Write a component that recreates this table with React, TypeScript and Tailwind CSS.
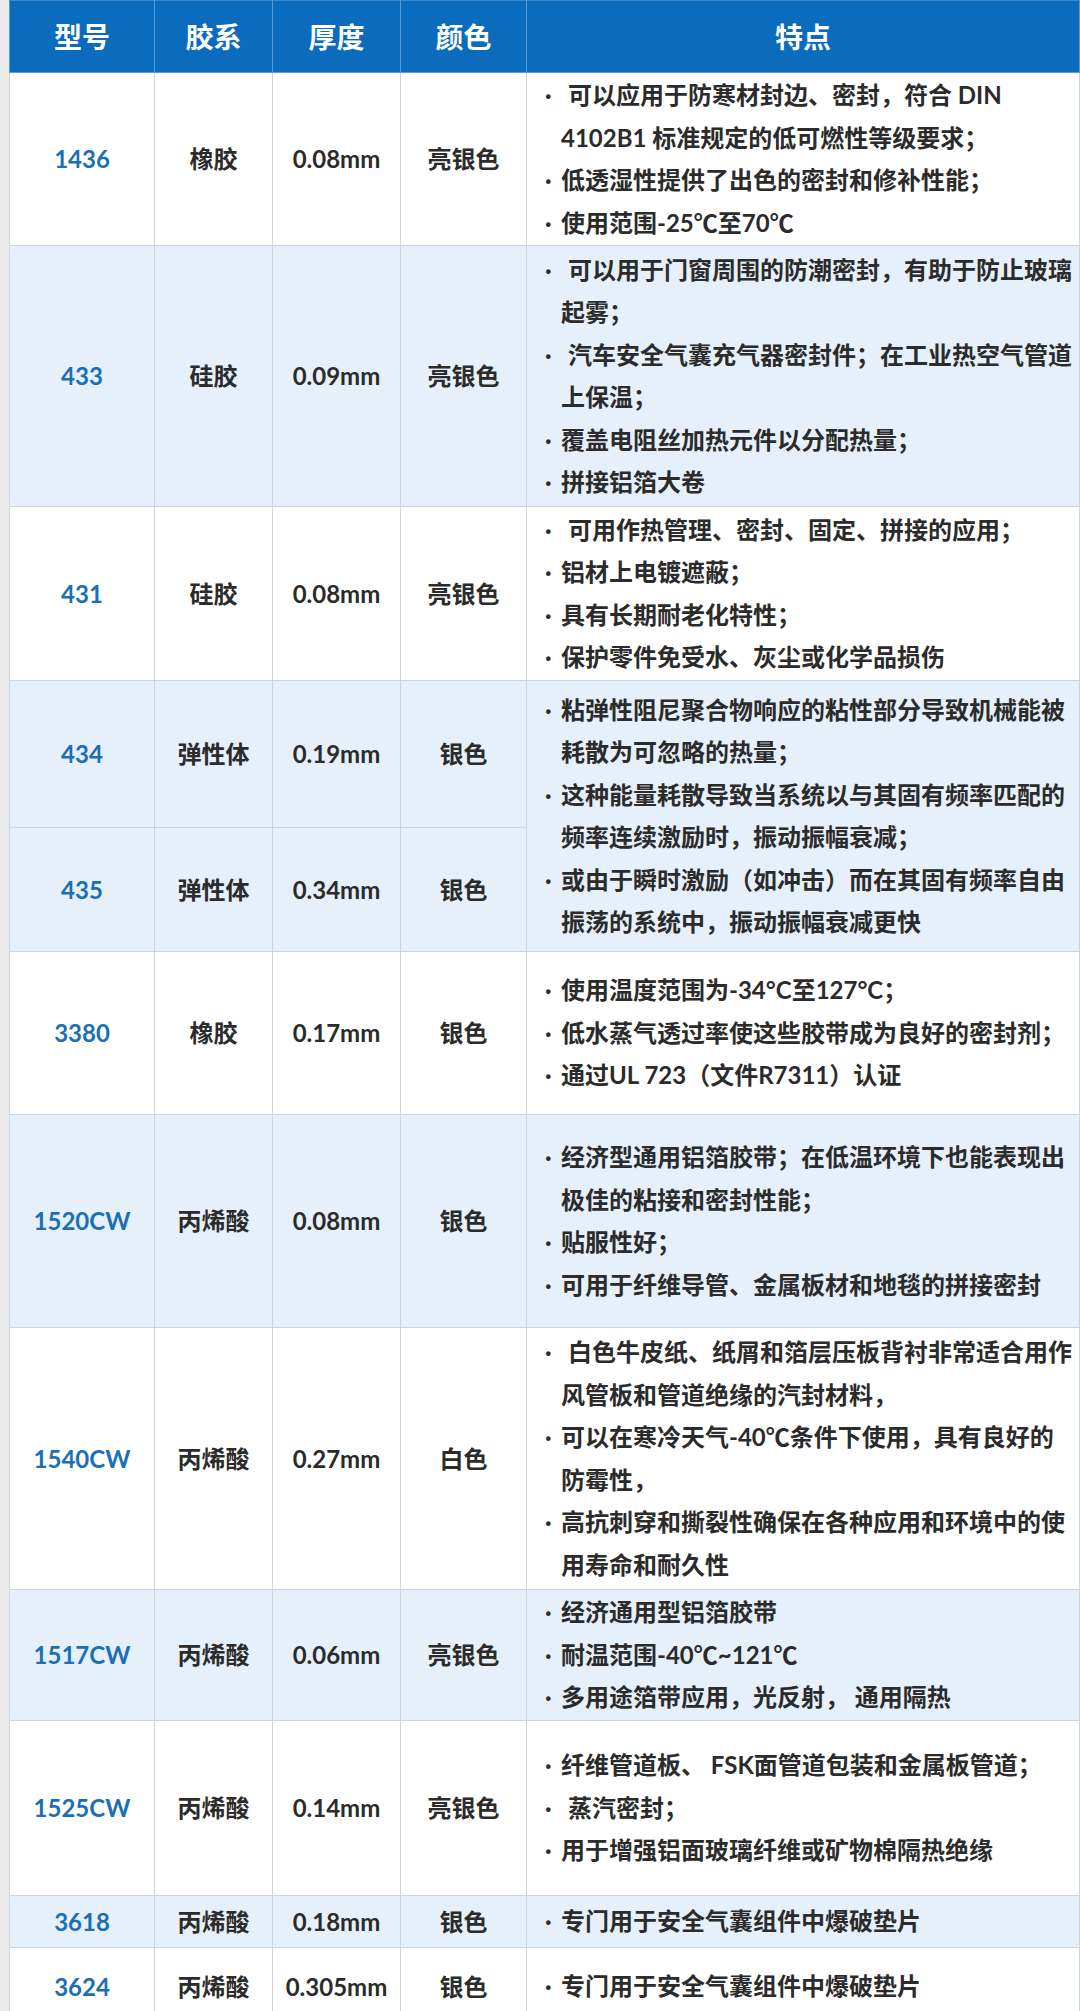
type Feature = { lead?: boolean; lines: string[] };

type Row = {
  id: string;
  glue: string;
  thick: string;
  color: string;
  h: string;
  blue: boolean;
  feats?: Feature[];
  span?: number;
};

const rows: Row[] = [
  {
    id: "1436",
    glue: "橡胶",
    thick: "0.08mm",
    color: "亮银色",
    h: "h-[173px]",
    blue: false,
    feats: [
      { lead: true, lines: ["可以应用于防寒材封边、密封，符合 DIN", "4102B1 标准规定的低可燃性等级要求；"] },
      { lines: ["低透湿性提供了出色的密封和修补性能；"] },
      { lines: ["使用范围-25℃至70℃"] },
    ],
  },
  {
    id: "433",
    glue: "硅胶",
    thick: "0.09mm",
    color: "亮银色",
    h: "h-[261px]",
    blue: true,
    feats: [
      { lead: true, lines: ["可以用于门窗周围的防潮密封，有助于防止玻璃", "起雾；"] },
      { lead: true, lines: ["汽车安全气囊充气器密封件；在工业热空气管道", "上保温；"] },
      { lines: ["覆盖电阻丝加热元件以分配热量；"] },
      { lines: ["拼接铝箔大卷"] },
    ],
  },
  {
    id: "431",
    glue: "硅胶",
    thick: "0.08mm",
    color: "亮银色",
    h: "h-[174px]",
    blue: false,
    feats: [
      { lead: true, lines: ["可用作热管理、密封、固定、拼接的应用；"] },
      { lines: ["铝材上电镀遮蔽；"] },
      { lines: ["具有长期耐老化特性；"] },
      { lines: ["保护零件免受水、灰尘或化学品损伤"] },
    ],
  },
  {
    id: "434",
    glue: "弹性体",
    thick: "0.19mm",
    color: "银色",
    h: "h-[147px]",
    blue: true,
    span: 2,
    feats: [
      { lines: ["粘弹性阻尼聚合物响应的粘性部分导致机械能被", "耗散为可忽略的热量；"] },
      { lines: ["这种能量耗散导致当系统以与其固有频率匹配的", "频率连续激励时，振动振幅衰减；"] },
      { lines: ["或由于瞬时激励（如冲击）而在其固有频率自由", "振荡的系统中，振动振幅衰减更快"] },
    ],
  },
  {
    id: "435",
    glue: "弹性体",
    thick: "0.34mm",
    color: "银色",
    h: "h-[124px]",
    blue: true,
  },
  {
    id: "3380",
    glue: "橡胶",
    thick: "0.17mm",
    color: "银色",
    h: "h-[163px]",
    blue: false,
    feats: [
      { lines: ["使用温度范围为-34°C至127°C；"] },
      { lines: ["低水蒸气透过率使这些胶带成为良好的密封剂；"] },
      { lines: ["通过UL 723（文件R7311）认证"] },
    ],
  },
  {
    id: "1520CW",
    glue: "丙烯酸",
    thick: "0.08mm",
    color: "银色",
    h: "h-[213px]",
    blue: true,
    feats: [
      { lines: ["经济型通用铝箔胶带；在低温环境下也能表现出", "极佳的粘接和密封性能；"] },
      { lines: ["贴服性好；"] },
      { lines: ["可用于纤维导管、金属板材和地毯的拼接密封"] },
    ],
  },
  {
    id: "1540CW",
    glue: "丙烯酸",
    thick: "0.27mm",
    color: "白色",
    h: "h-[262px]",
    blue: false,
    feats: [
      { lead: true, lines: ["白色牛皮纸、纸屑和箔层压板背衬非常适合用作", "风管板和管道绝缘的汽封材料，"] },
      { lines: ["可以在寒冷天气-40℃条件下使用，具有良好的", "防霉性，"] },
      { lines: ["高抗刺穿和撕裂性确保在各种应用和环境中的使", "用寿命和耐久性"] },
    ],
  },
  {
    id: "1517CW",
    glue: "丙烯酸",
    thick: "0.06mm",
    color: "亮银色",
    h: "h-[131px]",
    blue: true,
    feats: [
      { lines: ["经济通用型铝箔胶带"] },
      { lines: ["耐温范围-40℃~121℃"] },
      { lines: ["多用途箔带应用，光反射， 通用隔热"] },
    ],
  },
  {
    id: "1525CW",
    glue: "丙烯酸",
    thick: "0.14mm",
    color: "亮银色",
    h: "h-[175px]",
    blue: false,
    feats: [
      { lines: ["纤维管道板、 FSK面管道包装和金属板管道；"] },
      { lead: true, lines: ["蒸汽密封；"] },
      { lines: ["用于增强铝面玻璃纤维或矿物棉隔热绝缘"] },
    ],
  },
  {
    id: "3618",
    glue: "丙烯酸",
    thick: "0.18mm",
    color: "银色",
    h: "h-[52px]",
    blue: true,
    feats: [{ lines: ["专门用于安全气囊组件中爆破垫片"] }],
  },
  {
    id: "3624",
    glue: "丙烯酸",
    thick: "0.305mm",
    color: "银色",
    h: "h-[78px]",
    blue: false,
    feats: [{ lines: ["专门用于安全气囊组件中爆破垫片"] }],
  },
];

const heads = ["型号", "胶系", "厚度", "颜色", "特点"];

function Features({ feats }: { feats: Feature[] }) {
  return (
    <div className="flex flex-col pl-[18px] text-left leading-[42.5px]">
      {feats.map((f, i) => (
        <div key={i} className="flex">
          <span className="w-[16px] shrink-0">·</span>
          <div className={f.lead ? "pl-[7px]" : ""}>
            {f.lines.map((l, j) => (
              <div key={j} className={j > 0 && f.lead ? "-ml-[7px] whitespace-nowrap" : "whitespace-nowrap"}>
                {l}
              </div>
            ))}
          </div>
        </div>
      ))}
    </div>
  );
}

export default function App() {
  return (
    <div className="bg-[#ebebeb] pl-[9px] font-['Lato','Noto_Sans_CJK_SC',sans-serif] font-bold">
      <table className="w-full table-fixed border-collapse bg-white text-[24px] text-[#2b2b2b]">
        <colgroup>
          <col className="w-[145px]" />
          <col className="w-[118px]" />
          <col className="w-[128px]" />
          <col className="w-[126px]" />
          <col />
        </colgroup>
        <thead>
          <tr className="h-[72px] bg-[#0b6bbd] text-[28px] text-white">
            {heads.map((t) => (
              <th key={t} className="border border-[#5b9bd3] border-t-[#3d86c8] font-bold">
                {t}
              </th>
            ))}
          </tr>
        </thead>
        <tbody>
          {rows.map((r) => {
            const bg = r.blue ? "bg-[#e6f0fb]" : "bg-white";
            const cell = "border border-[#cdd5de] text-center align-middle";
            return (
              <tr key={r.id} className={`${r.h} ${bg}`}>
                <td className={`${cell} text-[#1a6fb6]`}>{r.id}</td>
                <td className={cell}>{r.glue}</td>
                <td className={cell}>{r.thick}</td>
                <td className={cell}>{r.color}</td>
                {r.feats && (
                  <td rowSpan={r.span ?? 1} className="border border-[#cdd5de] align-middle">
                    <Features feats={r.feats} />
                  </td>
                )}
              </tr>
            );
          })}
        </tbody>
      </table>
    </div>
  );
}
